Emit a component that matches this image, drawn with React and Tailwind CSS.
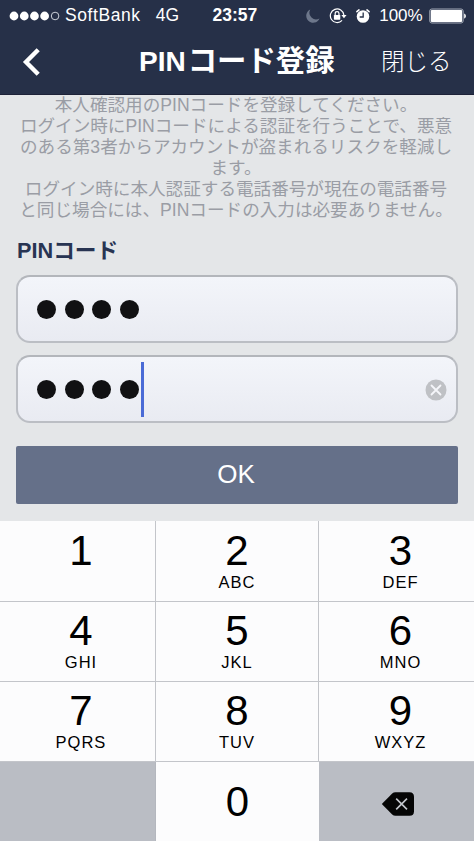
const keys = [
    { digit: '1', letters: '' },
    { digit: '2', letters: 'ABC' },
    { digit: '3', letters: 'DEF' },
    { digit: '4', letters: 'GHI' },
    { digit: '5', letters: 'JKL' },
    { digit: '6', letters: 'MNO' },
    { digit: '7', letters: 'PQRS' },
    { digit: '8', letters: 'TUV' },
    { digit: '9', letters: 'WXYZ' },
]

const messageLines = [
    '本人確認用のPINコードを登録してください。',
    'ログイン時にPINコードによる認証を行うことで、悪意',
    'のある第3者からアカウントが盗まれるリスクを軽減し',
    'ます。',
    'ログイン時に本人認証する電話番号が現在の電話番号',
    'と同じ場合には、PINコードの入力は必要ありません。',
]

function StatusBar() {
    return (
        <div className="flex h-[31px] items-center pl-[9px] pr-[7px] text-[17.5px] leading-[31px]">
            <svg width="51" height="10" viewBox="0 0 51 10" fill="#fff">
                <circle cx="5" cy="5" r="4.4" />
                <circle cx="15.3" cy="5" r="4.4" />
                <circle cx="25.5" cy="5" r="4.4" />
                <circle cx="35.7" cy="5" r="4.4" />
                <circle cx="46.2" cy="5" r="3.8" fill="none" stroke="#dfe3ea" strokeWidth="0.9" />
            </svg>
            <span className="ml-[5px] w-[91px] tracking-[0.6px]">SoftBank</span>
            <span className="w-[57px]">4G</span>
            <span className="w-[93px] font-bold">23:57</span>
            <svg width="15" height="14" viewBox="-1 0 15 14" fill="#6d778b">
                <path d="M4.3.5A6.9 6.9 0 1 0 13.5 9.5 6.7 6.7 0 0 1 4.3.5z" />
            </svg>
            <svg className="ml-[9px]" width="18" height="16" viewBox="0 0 18 16" fill="none" stroke="#fff" strokeWidth="1.2">
                <path d="M13.1 12.4A6.8 6.8 0 1 1 14.9 7" />
                <path d="M12.4 7.1h5.2L15 10.3z" fill="#fff" stroke="none" />
                <rect x="4.9" y="7" width="6.4" height="4.7" rx="0.6" fill="#fff" stroke="none" />
                <path d="M6.2 7V5.6a1.9 1.9 0 0 1 3.8 0V7" />
            </svg>
            <svg className="ml-[8px]" width="16" height="16" viewBox="0 0 16 16">
                <circle cx="8" cy="8.5" r="6.3" fill="#fff" />
                <path d="M1.9 3.7 4 1.9M14.1 3.7 12 1.9" stroke="#fff" strokeWidth="1.6" strokeLinecap="round" />
                <path d="M8.2 4.5V9H4.7" fill="none" stroke="#263048" strokeWidth="1.3" />
            </svg>
            <span className="ml-[8px] w-[50px] text-[17px]">100%</span>
            <svg width="38" height="16" viewBox="0 0 38 16">
                <rect x="0.8" y="1" width="33.4" height="14" rx="2" fill="none" stroke="#a9b0bc" strokeWidth="1" />
                <rect x="1.8" y="2" width="31.4" height="12" rx="1" fill="#fff" />
                <path d="M35.3 5.4c2.2.9 2.2 4.3 0 5.2z" fill="#fff" />
            </svg>
        </div>
    )
}

function NavBar() {
    return (
        <div className="flex h-[63px] items-center pl-[22px] pb-[2px]">
            <svg className="mt-[1px]" width="20" height="28" viewBox="0 0 20 28" fill="none" stroke="#fff" strokeWidth="4.4">
                <path d="M16.2 1.7 4 14l12.2 12.3" />
            </svg>
            <h1 className="ml-[95px] w-[244px] whitespace-nowrap pl-[2px] text-[28px] font-bold leading-[40px]">
                PIN<span className="ml-[2px] text-[29.4px]">コード登録</span>
            </h1>
            <button className="whitespace-nowrap text-[23.5px] font-light leading-[40px]">閉じる</button>
        </div>
    )
}

function PinDots() {
    return (
        <div className="flex gap-[8.5px]">
            {[0, 1, 2, 3].map((dot) => (
                <span key={dot} className="h-[19px] w-[19px] rounded-full bg-[#111113]" />
            ))}
        </div>
    )
}

function PinField({ active }) {
    return (
        <div className="flex h-[68px] items-center rounded-[14px] border-2 border-[#bbbec4] border-t-[#b3b6bb] bg-linear-to-b from-[#f3f5fa] to-[#e9ebf2] pl-[19px] pr-[9px] pt-[1px]">
            <PinDots />
            {active && <span className="ml-[2px] h-[55px] w-[3px] bg-[#4a6bd6]" />}
            {active && (
                <svg className="ml-auto" width="22" height="22" viewBox="0 0 22 22">
                    <circle cx="11" cy="11" r="10.5" fill="#bfc1c5" />
                    <path d="m6.5 6.5 9 9m0-9-9 9" stroke="#f5f6fa" strokeWidth="1.8" strokeLinecap="round" />
                </svg>
            )}
        </div>
    )
}

function Key({ digit, letters }) {
    return (
        <button className="flex h-[80px] flex-col items-center border-b border-r border-[#c3c5ca] bg-[#fcfcfd] pt-[8px] nth-[-n+3]:h-[81px] nth-[-n+3]:pt-[9px] nth-[3n]:border-r-0 nth-[3n]:pl-[8px] nth-[3n+1]:pl-[7px]">
            <span className="text-[42px] leading-[42px]">{digit}</span>
            <span className="text-[16.5px] leading-[20px] tracking-[1px]">{letters}</span>
        </button>
    )
}

export default function App() {
    return (
        <div className="flex h-[841px] w-[474px] flex-col overflow-hidden bg-[#e4e6e8] font-['Liberation_Sans','Noto_Sans_CJK_JP',sans-serif]">
            {/* Header */}
            <header className="h-[95px] shrink-0 border-b border-[#1d2238] bg-[#263048] text-white">
                <StatusBar />
                <NavBar />
            </header>

            {/* Form */}
            <main className="h-[426px] shrink-0 px-4">
                <div className="-mx-4 h-[137px] overflow-hidden">
                    <div className="-ml-[2px] text-center text-[17.6px] leading-[21.1px] text-[#9a9da5]">
                        {messageLines.map((line) => (
                            <p key={line} className="whitespace-nowrap">{line}</p>
                        ))}
                    </div>
                </div>
                <h2 className="h-[43px] pl-[1px] text-[21.7px] font-bold leading-[37px] text-[#283452]">PINコード</h2>
                <div className="flex flex-col gap-3">
                    <PinField />
                    <PinField active />
                </div>
                <button className="mt-[23px] block h-[58px] w-full rounded-[2px] bg-[#657089] pr-[2px] pb-[2px] text-[26px] leading-[54px] text-white">OK</button>
            </main>

            {/* Keypad */}
            <div className="grid shrink-0 grid-cols-[156px_163px_155px]">
                {keys.map((key) => (
                    <Key key={key.digit} digit={key.digit} letters={key.letters} />
                ))}
                <div className="h-[79px] border-r border-[#b4b7be] bg-[#babdc4]" />
                <button className="h-[79px] bg-[#fcfcfd] text-[42px] leading-[79px]">0</button>
                <button className="flex h-[79px] items-center bg-[#babdc4] pl-[62px] pt-[4px]">
                    <svg width="34" height="24" viewBox="0 0 34 24">
                        <path d="M.8 12 11.2 1.5Q12.5.2 14.5.2H28.5Q33 .2 33 4.7V19.3Q33 23.8 28.5 23.8H14.5Q12.5 23.8 11.2 22.5z" fill="#050505" />
                        <path d="m15.2 6.6 10.8 10.8m0-10.8L15.2 17.4" stroke="#c3c6cc" strokeWidth="1.6" />
                    </svg>
                </button>
            </div>
        </div>
    )
}
